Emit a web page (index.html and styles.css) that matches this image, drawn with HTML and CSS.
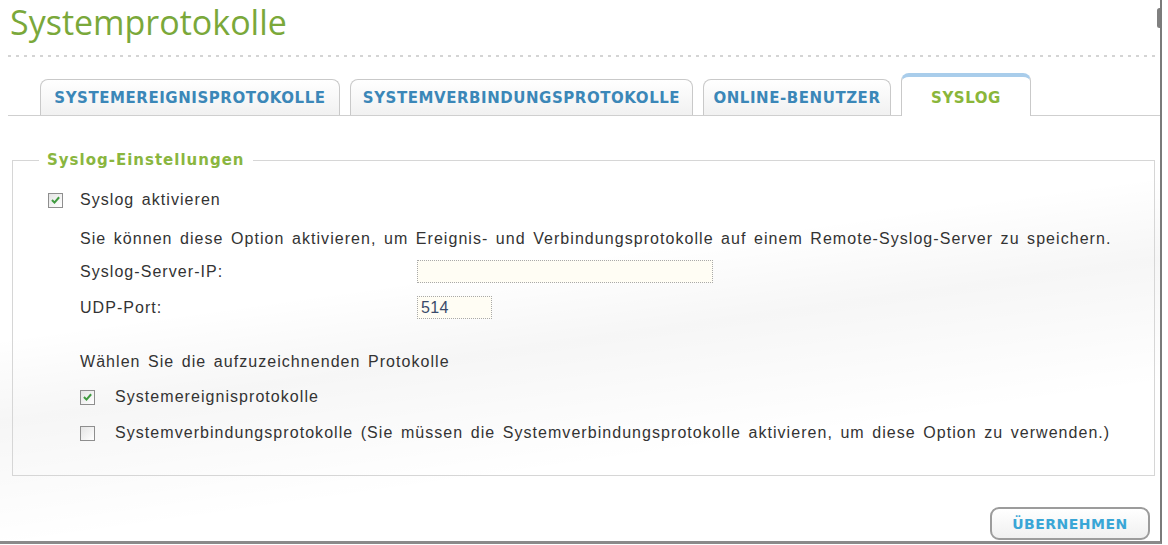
FILE: index.html
```html
<!DOCTYPE html>
<html lang="de">
<head>
<meta charset="utf-8">
<title>Systemprotokolle</title>
<link rel="stylesheet" href="styles.css">
</head>
<body>
<div class="window">
  <h1 class="title">Systemprotokolle</h1>
  <div class="rule"></div>
  <div class="tabs">
    <div class="tab tab-1">SYSTEMEREIGNISPROTOKOLLE</div>
    <div class="tab tab-2">SYSTEMVERBINDUNGSPROTOKOLLE</div>
    <div class="tab tab-3">ONLINE-BENUTZER</div>
    <div class="tab tab-active">SYSLOG</div>
  </div>
  <fieldset class="settings">
    <legend>Syslog-Einstellungen</legend>
    <div class="row row-enable">
      <span class="cb checked"><svg viewBox="0 0 14 14" width="14" height="14"><path d="M3.2 7 L5.9 9.8 L10.9 4" fill="none" stroke="#3f9a3f" stroke-width="2.2"/></svg></span>
      <span class="label">Syslog aktivieren</span>
    </div>
    <div class="row row-desc indent">Sie können diese Option aktivieren, um Ereignis- und Verbindungsprotokolle auf einem Remote-Syslog-Server zu speichern.</div>
    <div class="row row-ip indent">
      <span class="field-label">Syslog-Server-IP:</span>
      <span class="input input-ip"></span>
    </div>
    <div class="row row-port indent">
      <span class="field-label">UDP-Port:</span>
      <span class="input input-port">514</span>
    </div>
    <div class="row row-choose indent">Wählen Sie die aufzuzeichnenden Protokolle</div>
    <div class="row row-opt1 indent">
      <span class="cb checked"><svg viewBox="0 0 14 14" width="14" height="14"><path d="M3.2 7 L5.9 9.8 L10.9 4" fill="none" stroke="#3f9a3f" stroke-width="2.2"/></svg></span>
      <span class="label label-wide">Systemereignisprotokolle</span>
    </div>
    <div class="row row-opt2 indent">
      <span class="cb"></span>
      <span class="label label-wide">Systemverbindungsprotokolle (Sie müssen die Systemverbindungsprotokolle aktivieren, um diese Option zu verwenden.)</span>
    </div>
  </fieldset>
  <div class="actions">
    <button class="apply">ÜBERNEHMEN</button>
  </div>
  <div class="scroll-thumb"></div>
</div>
</body>
</html>
```
FILE: styles.css
```css
html, body {
  margin: 0;
  padding: 0;
  background: #ffffff;
}

.window {
  position: relative;
  width: 1160px;
  height: 541px;
  border-right: 2px solid #7a7a7a;
  border-bottom: 3px solid #8a8a8a;
  background:
    linear-gradient(172deg, rgba(255,255,255,0) 48%, rgba(0,0,0,0.035) 60%, rgba(255,255,255,0) 78%),
    #ffffff;
  font-family: "Liberation Sans", Arial, sans-serif;
  color: #333;
  overflow: hidden;
}

.title {
  margin: 0;
  padding-left: 10px;
  font-family: "Open Sans", sans-serif;
  font-weight: 400;
  font-size: 34px;
  line-height: 44px;
  color: #7aa83a;
}

.rule {
  margin: 11px 0 0 8px;
  width: 1150px;
  height: 2px;
  background-image: repeating-linear-gradient(90deg, #d4d4d4 0 3px, transparent 3px 8px);
}

.tabs {
  display: flex;
  align-items: flex-end;
  margin: 16px 0 0 8px;
  padding-left: 32px;
  height: 42px;
  border-bottom: 1px solid #cfcfcf;
  gap: 10px;
}

.tab {
  box-sizing: border-box;
  height: 36px;
  display: flex;
  align-items: center;
  justify-content: center;
  border: 1px solid #c9c9c9;
  border-bottom: none;
  border-radius: 8px 8px 0 0;
  background: linear-gradient(#ffffff, #f1f1f1);
  font-family: "DejaVu Sans", sans-serif;
  font-weight: bold;
  font-size: 15px;
  letter-spacing: 0.55px;
  color: #3b87b8;
  white-space: nowrap;
}

.tab-1 { width: 300px; }
.tab-2 { width: 343px; }
.tab-3 { width: 188px; }

.tab-active {
  width: 130px;
  height: 43px;
  margin-bottom: -1px;
  padding-top: 2px;
  border-top: 4px solid #a9cdeb;
  background: #ffffff;
  color: #8ab63a;
}

.settings {
  box-sizing: border-box;
  width: 1143px;
  margin: 34px 0 0 12px;
  padding: 0 0 30px 0;
  border: 1px solid #d6d6d6;
  min-width: 0;
}

.settings legend {
  margin-left: 26px;
  padding: 0 8px;
  font-family: "DejaVu Sans", sans-serif;
  font-weight: bold;
  font-size: 15px;
  letter-spacing: 1px;
  line-height: 20px;
  color: #8ab63f;
}

.row {
  display: flex;
  align-items: center;
  height: 24px;
  font-size: 16px;
  letter-spacing: 1.05px;
  word-spacing: 2px;
  white-space: nowrap;
}

.indent { padding-left: 67px; }

.row-enable { margin-top: 18px; padding-left: 35px; }
.row-desc { margin-top: 15px; }
.row-ip { margin-top: 9px; height: 23px; }
.row-port { margin-top: 13px; height: 23px; }
.row-choose { margin-top: 31px; }
.row-opt1 { margin-top: 11px; }
.row-opt2 { margin-top: 12px; }

.cb {
  box-sizing: border-box;
  width: 15px;
  height: 15px;
  flex: none;
  border: 1px solid #8e8e8e;
  background: linear-gradient(135deg, #e4e4e4, #ffffff);
  display: flex;
  align-items: center;
  justify-content: center;
}

.row-enable .label { margin-left: 17px; }
.label-wide { margin-left: 20px; }

.field-label { width: 337px; flex: none; }

.input {
  box-sizing: border-box;
  height: 23px;
  border: 1px dotted #a9a9a9;
  background: #fffdf4;
  display: flex;
  align-items: center;
  padding-left: 3px;
  font-size: 16px;
  color: #3a4a6a;
  letter-spacing: 0.3px;
}

.input-ip { width: 296px; }
.input-port { width: 75px; }

.actions {
  display: flex;
  justify-content: flex-end;
  padding-right: 10px;
  margin-top: 31px;
}

.apply {
  box-sizing: border-box;
  width: 160px;
  height: 33px;
  border: 2px solid #9c9c9c;
  border-radius: 9px;
  background: linear-gradient(#ffffff, #f0f0f0);
  font-family: "DejaVu Sans", sans-serif;
  font-weight: bold;
  font-size: 14px;
  letter-spacing: 0.5px;
  color: #3aa6d6;
  padding: 0;
}

.scroll-thumb {
  position: absolute;
  top: 8px;
  right: -2px;
  width: 5px;
  height: 20px;
  border-radius: 3px;
  background: #808080;
}
```
